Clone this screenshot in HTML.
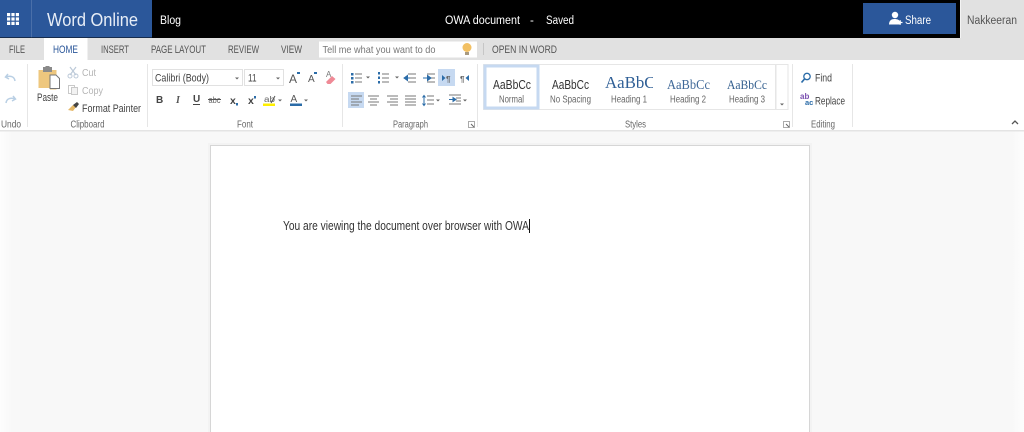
<!DOCTYPE html>
<html><head><meta charset="utf-8"><style>
html,body{margin:0;padding:0;background:#f8f8f8;width:1024px;height:432px;overflow:hidden}
svg{display:block;filter:blur(.25px)}
text{font-family:"Liberation Sans",sans-serif;font-size:10.5px;fill:#444}
.t{font-size:10.8px;fill:#555}
.g{fill:#666;font-size:9.8px}
.d{fill:#b5b5b5;font-size:10.500px}
.h{fill:#444;font-size:10.800px}
.ln{stroke:#777;stroke-width:1;fill:none}
</style></head><body>
<svg width="1024" height="432" viewBox="0 0 1024 432" xmlns="http://www.w3.org/2000/svg">
<defs><linearGradient id="bg" x1="0" x2="1" y1="0" y2="0"><stop offset="0" stop-color="#fdfdfd"/><stop offset=".012" stop-color="#f8f8f8"/><stop offset=".988" stop-color="#f8f8f8"/><stop offset="1" stop-color="#fdfdfd"/></linearGradient></defs>
<rect width="1024" height="432" fill="url(#bg)"/>
<!-- top -->
<rect width="1024" height="38" fill="#000"/>
<rect width="152" height="37.5" fill="#2b579a"/>
<rect x="31" width="1" height="37.5" fill="#4a6fa9"/>
<g fill="#fff"><rect x="7" y="13" width="3.200" height="3.200"/><rect x="11.400" y="13" width="3.200" height="3.200"/><rect x="15.800" y="13" width="3.200" height="3.200"/><rect x="7" y="17.400" width="3.200" height="3.200"/><rect x="11.400" y="17.400" width="3.200" height="3.200"/><rect x="15.800" y="17.400" width="3.200" height="3.200"/><rect x="7" y="21.800" width="3.200" height="3.200"/><rect x="11.400" y="21.800" width="3.200" height="3.200"/><rect x="15.800" y="21.800" width="3.200" height="3.200"/></g>
<text x="47" y="26" textLength="91" lengthAdjust="spacingAndGlyphs" style="font-size:18.500px;fill:#e8eef7">Word Online</text>
<text x="160" y="24" textLength="21" lengthAdjust="spacingAndGlyphs" style="font-size:11.500px;fill:#fff">Blog</text>
<text x="445" y="24" textLength="75" lengthAdjust="spacingAndGlyphs" style="font-size:11.500px;fill:#fff">OWA document</text>
<text x="530" y="24" style="font-size:11.500px;fill:#fff">-</text>
<text x="546" y="24" textLength="28" lengthAdjust="spacingAndGlyphs" style="font-size:11.500px;fill:#fff">Saved</text>
<rect x="863" y="3" width="93" height="31" fill="#2b579a"/>
<circle cx="895" cy="15" r="3.200" fill="#fff"/><path d="M889 24.500c0-4 2.500-5.500 5.500-5.500s5 1 5.500 3v2.500z" fill="#fff"/>
<path d="M898 22.500h4.500M900.200 20.200v4.600" stroke="#fff" stroke-width="1.300"/>
<text x="905" y="24" textLength="26" lengthAdjust="spacingAndGlyphs" style="font-size:11.500px;fill:#fff">Share</text>
<!-- tab row -->
<rect y="38" width="1024" height="22" fill="#e1e1e1"/>
<rect x="960" y="0" width="64" height="60" fill="#e1e1e1"/>
<rect x="960" y="0" width="1" height="38" fill="#f4f4f4"/>
<text x="967" y="24" textLength="50" lengthAdjust="spacingAndGlyphs" style="font-size:11.500px;fill:#555">Nakkeeran</text>
<rect x="44" y="38" width="43.500" height="22" fill="#fff"/>
<text class="t" x="9" y="53" textLength="16" lengthAdjust="spacingAndGlyphs">FILE</text>
<text x="53" y="53" textLength="25" lengthAdjust="spacingAndGlyphs" style="fill:#2b579a;font-size:10.800px">HOME</text>
<text class="t" x="101" y="53" textLength="28" lengthAdjust="spacingAndGlyphs">INSERT</text>
<text class="t" x="151" y="53" textLength="55" lengthAdjust="spacingAndGlyphs">PAGE LAYOUT</text>
<text class="t" x="228" y="53" textLength="31" lengthAdjust="spacingAndGlyphs">REVIEW</text>
<text class="t" x="281" y="53" textLength="21" lengthAdjust="spacingAndGlyphs">VIEW</text>
<rect x="319" y="41.500" width="158" height="16" fill="#fff"/>
<text x="322.500" y="53" textLength="113" lengthAdjust="spacingAndGlyphs" style="font-size:10.500px;fill:#777">Tell me what you want to do</text>
<circle cx="467" cy="47.500" r="4.500" fill="#f2c063"/><rect x="465" y="52" width="4" height="3" fill="#a89a80"/>
<rect x="483" y="43" width="1" height="12" fill="#c6c6c6"/>
<text class="t" x="492" y="53" textLength="65" lengthAdjust="spacingAndGlyphs">OPEN IN WORD</text>
<!-- ribbon -->
<rect y="60" width="1024" height="70" fill="#fff"/>
<rect y="130" width="1024" height="1.500" fill="#e4e4e4"/>
<g fill="#e6e6e6"><rect x="27" y="64" width="1" height="63"/><rect x="147" y="64" width="1" height="63"/><rect x="342" y="64" width="1" height="63"/><rect x="477" y="64" width="1" height="63"/><rect x="792" y="64" width="1" height="63"/><rect x="852" y="64" width="1" height="63"/></g>
<!-- undo redo -->
<path d="M8 74 5.500 77l3.500 2M5.500 77c4-1.500 9-1 9.500 4" fill="none" stroke="#b9cfe4" stroke-width="1.500"/>
<path d="M13 96 15.500 99 12 101M15.500 99c-4-1.500-9-1-9.500 4" fill="none" stroke="#b9cfe4" stroke-width="1.500"/>
<text class="g" x="1" y="127.500" textLength="20" lengthAdjust="spacingAndGlyphs">Undo</text>
<!-- clipboard -->
<path d="M38.500 70h18v19.500H50V88H38.500z" fill="#eec77e"/><rect x="43" y="67" width="9" height="5" fill="#8a8a8a"/><rect x="45.500" y="66" width="4" height="2" fill="#8a8a8a"/>
<path d="M50 75h6l3.500 3.500V88.500H50z" fill="#fff" stroke="#777"/>
<text class="h" x="37" y="101" textLength="21" lengthAdjust="spacingAndGlyphs">Paste</text>
<path d="M70 67l6 8M76 67l-6 8" stroke="#bcc9d8" stroke-width="1.200"/><circle cx="70" cy="76" r="2" fill="none" stroke="#bcc9d8"/><circle cx="76" cy="76" r="2" fill="none" stroke="#bcc9d8"/>
<text class="d" x="82" y="76" textLength="14" lengthAdjust="spacingAndGlyphs">Cut</text>
<rect x="68.500" y="85.500" width="6" height="8" fill="#fff" stroke="#c9c9c9"/><rect x="71.500" y="87.500" width="6" height="7" fill="#f2f2f2" stroke="#c9c9c9"/>
<text class="d" x="82" y="94" textLength="21" lengthAdjust="spacingAndGlyphs">Copy</text>
<path d="M68 110l5-5 3 2-3 4z" fill="#e5b868"/><path d="M73 105l4-3 2 2-3 4z" fill="#444"/>
<text class="h" x="82" y="112" textLength="59" lengthAdjust="spacingAndGlyphs">Format Painter</text>
<text class="g" x="70.500" y="127.500" textLength="34" lengthAdjust="spacingAndGlyphs">Clipboard</text>
<!-- font -->
<rect x="152.500" y="69.500" width="90" height="16" fill="#fff" stroke="#e1e1e1"/>
<rect x="244.500" y="69.500" width="39" height="16" fill="#fff" stroke="#e1e1e1"/>
<text class="h" x="155" y="81.500" textLength="54" lengthAdjust="spacingAndGlyphs">Calibri (Body)</text>
<text class="h" x="248" y="81.500" textLength="8.500" lengthAdjust="spacingAndGlyphs">11</text>
<path d="M235 77.500h4l-2 2zM276 77.500h4l-2 2z" fill="#666"/>
<text x="289" y="83" style="font-size:12px;fill:#555">A</text><rect x="297" y="72" width="3" height="2" fill="#2b6ca8"/>
<text x="308" y="82" style="font-size:10px;fill:#555">A</text><rect x="314" y="72" width="3" height="2" fill="#2b6ca8"/>
<text x="326" y="77" style="font-size:8px;fill:#777">A</text><path d="M326 82l6-6 3.500 3-5 5h-3z" fill="#ef8a96"/>
<text x="156" y="103" style="font-size:10px;font-weight:bold;fill:#444">B</text>
<text x="176" y="103" style="font-size:10px;font-style:italic;font-weight:bold;fill:#555;font-family:'Liberation Serif',serif">I</text>
<text x="193" y="102" style="font-size:10px;font-weight:bold;fill:#444">U</text><rect x="193" y="104" width="7" height="1" fill="#444"/>
<text x="208.500" y="103" textLength="12" lengthAdjust="spacingAndGlyphs" style="font-size:9.500px;fill:#666">abc</text><rect x="208" y="99" width="13" height="1" fill="#555"/>
<text x="230" y="104" style="font-size:10.500px;font-weight:bold;fill:#444">x</text><rect x="236" y="103" width="2" height="2.500" fill="#2b6ca8"/>
<text x="248" y="104" style="font-size:10.500px;font-weight:bold;fill:#444">x</text><rect x="254" y="96" width="2" height="2.500" fill="#2b6ca8"/>
<text x="264" y="102" textLength="11" lengthAdjust="spacingAndGlyphs" style="font-size:8px;fill:#666">ab</text><path d="M271 103l4-7" stroke="#555"/>
<rect x="263" y="103.500" width="12" height="2.500" fill="#ffef00"/><path d="M278 99.500h4l-2 2zM304 99.500h4l-2 2z" fill="#666"/>
<text x="290.500" y="102" style="font-size:10px;fill:#555">A</text><rect x="290" y="103.500" width="12" height="2.500" fill="#2b6ca8"/>
<text class="g" x="237" y="127.500" textLength="16" lengthAdjust="spacingAndGlyphs">Font</text>
<!-- paragraph -->
<rect x="438" y="69" width="17" height="17" fill="#c6d9f1"/>
<rect x="348" y="92" width="16" height="16" fill="#c6d9f1"/>
<g fill="#2b6ca8"><rect x="351" y="73" width="2.500" height="2.500"/><rect x="351" y="77" width="2.500" height="2.500"/><rect x="351" y="81" width="2.500" height="2.500"/></g>
<path class="ln" d="M355 74h7M355 78h7M355 82h7M382 74h7M382 78h7M382 82h7"/>
<path d="M366 76.500h4l-2 2zM395 76.500h4l-2 2z" fill="#666"/>
<g fill="#2b6ca8"><rect x="378" y="72" width="2" height="2.500"/><rect x="378" y="76.500" width="2" height="2.500"/><rect x="378" y="81" width="2" height="2.500"/></g>
<path class="ln" d="M408 74h8M408 78h8M408 82h8M427 74h8M427 78h8M427 82h8"/>
<path d="M404 78l3.500-2.500v5zM404 78h6" fill="#2b6ca8" stroke="#2b6ca8"/>
<path d="M431 78l-3.500-2.500v5zM423 78h6" fill="#2b6ca8" stroke="#2b6ca8"/>
<path d="M442 75v6l3.500-3z" fill="#2b6ca8"/><text x="446" y="82" style="font-size:8px;font-weight:bold;fill:#666">¶</text>
<text x="460" y="82" style="font-size:8px;font-weight:bold;fill:#666">¶</text><path d="M469 75v6l-3.500-3z" fill="#2b6ca8"/>
<path class="ln" d="M351 96h11M351 99h8M351 102h11M351 105h8"/>
<path class="ln" d="M368 96h11M370 99h7M368 102h11M370 105h7"/>
<path class="ln" d="M387 96h11M390 99h8M387 102h11M390 105h8"/>
<path class="ln" d="M405 96h11M405 99h11M405 102h11M405 105h11"/>
<path class="ln" d="M427 96h7M427 100h7M427 104h7"/><path d="M424 96v9M422.500 97.500l1.500-2 1.500 2M422.500 103.500l1.500 2 1.500-2" fill="none" stroke="#2b6ca8"/>
<path d="M436 99.500h4l-2 2zM463 99.500h4l-2 2z" fill="#666"/>
<path class="ln" d="M449 95h12M456 98h5M456 101h5M449 104h12"/><path d="M449 99.500h4M453 97.500v4l3-2z" stroke="#2b6ca8" fill="#2b6ca8"/>
<text class="g" x="393" y="127.500" textLength="35" lengthAdjust="spacingAndGlyphs">Paragraph</text>
<path d="M468.500 121.500h6v6h-6z" fill="none" stroke="#aaa"/><path d="M471 124l3 3" stroke="#666"/>
<!-- styles -->
<rect x="483.500" y="64.500" width="292" height="45" fill="#fff" stroke="#e6e6e6"/>
<rect x="776" y="64.500" width="12" height="45" fill="#fff" stroke="#e6e6e6"/>
<path d="M780 103.500h4l-2 2z" fill="#666"/>
<rect x="485" y="66" width="53" height="42" fill="#fff" stroke="#c6d9f1" stroke-width="3"/>
<text x="493" y="89" textLength="38" lengthAdjust="spacingAndGlyphs" style="font-size:13px;fill:#333">AaBbCc</text>
<text x="552" y="89" textLength="37" lengthAdjust="spacingAndGlyphs" style="font-size:13px;fill:#333">AaBbCc</text>
<text x="605" y="88" textLength="58" lengthAdjust="spacingAndGlyphs" style="font-size:16.500px;fill:#2f5f96;font-family:'Liberation Serif',serif">AaBbCc</text>
<rect x="653" y="68" width="12" height="28" fill="#fff"/>
<text x="667" y="89" textLength="43" lengthAdjust="spacingAndGlyphs" style="font-size:13.500px;fill:#3f6898;font-family:'Liberation Serif',serif">AaBbCc</text>
<text x="727" y="89" textLength="40" lengthAdjust="spacingAndGlyphs" style="font-size:12.500px;fill:#35608f;font-family:'Liberation Serif',serif">AaBbCc</text>
<text class="g" x="499" y="102.500" textLength="25" lengthAdjust="spacingAndGlyphs">Normal</text>
<text class="g" x="550" y="102.500" textLength="41" lengthAdjust="spacingAndGlyphs">No Spacing</text>
<text class="g" x="611" y="102.500" textLength="36" lengthAdjust="spacingAndGlyphs">Heading 1</text>
<text class="g" x="670" y="102.500" textLength="36" lengthAdjust="spacingAndGlyphs">Heading 2</text>
<text class="g" x="729" y="102.500" textLength="36" lengthAdjust="spacingAndGlyphs">Heading 3</text>
<text class="g" x="625" y="127.500" textLength="21" lengthAdjust="spacingAndGlyphs">Styles</text>
<path d="M783.500 121.500h6v6h-6z" fill="none" stroke="#aaa"/><path d="M786 124l3 3" stroke="#666"/>
<!-- editing -->
<circle cx="807" cy="76.500" r="3.200" fill="none" stroke="#2b6ca8" stroke-width="1.300"/><path d="M804.500 79l-3 3.500" stroke="#2b6ca8" stroke-width="1.700"/>
<text class="h" x="815" y="81.500" textLength="17" lengthAdjust="spacingAndGlyphs">Find</text>
<text x="800" y="99" style="font-size:8px;fill:#7a4fb0;font-weight:bold">ab</text><text x="805" y="105" style="font-size:7.500px;fill:#2b6ca8;font-weight:bold">ac</text>
<text class="h" x="815" y="104.500" textLength="30" lengthAdjust="spacingAndGlyphs">Replace</text>
<text class="g" x="811" y="127.500" textLength="24" lengthAdjust="spacingAndGlyphs">Editing</text>
<path d="M1012 124l3-3 3 3" fill="none" stroke="#555" stroke-width="1.300"/>
<!-- page -->
<rect x="208" y="143" width="604" height="289" fill="#eee" opacity=".5"/>
<rect x="210.500" y="145.500" width="599" height="290" fill="#fff" stroke="#d6d6d6"/>
<text x="283" y="230" textLength="246" lengthAdjust="spacingAndGlyphs" style="font-size:12.800px;fill:#333">You are viewing the document over browser with OWA</text>
<rect x="529" y="219" width="1" height="14" fill="#111"/>
</svg>
</body></html>
